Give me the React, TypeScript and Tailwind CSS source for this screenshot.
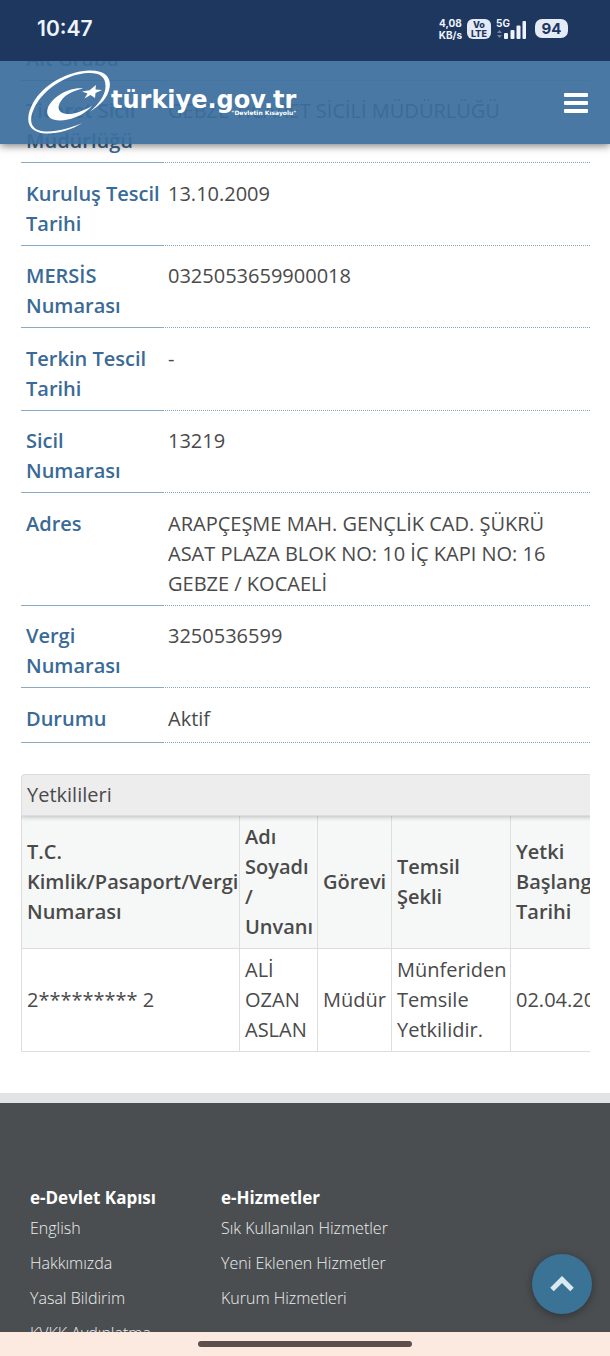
import type { ReactNode } from "react";

const DETAILS: { label: ReactNode; value: string }[] = [
  { label: "Alt Grubu", value: "" },
  { label: "Ticaret Sicil Müdürlüğü", value: "GEBZE TİCARET SİCİLİ MÜDÜRLÜĞÜ" },
  { label: "Kuruluş Tescil Tarihi", value: "13.10.2009" },
  { label: "MERSİS Numarası", value: "0325053659900018" },
  { label: "Terkin Tescil Tarihi", value: "-" },
  { label: "Sicil Numarası", value: "13219" },
  {
    label: "Adres",
    value:
      "ARAPÇEŞME MAH. GENÇLİK CAD. ŞÜKRÜ ASAT PLAZA BLOK NO: 10 İÇ KAPI NO: 16 GEBZE / KOCAELİ",
  },
  { label: "Vergi Numarası", value: "3250536599" },
  { label: "Durumu", value: "Aktif" },
];

const COLUMNS = [
  { title: "T.C. Kimlik/Pasaport/Vergi Numarası", width: "w-[218px]" },
  { title: "Adı Soyadı / Unvanı", width: "w-[78px]" },
  { title: "Görevi", width: "w-[74px]" },
  { title: "Temsil Şekli", width: "w-[119px]" },
  { title: "Yetki Başlangıç Tarihi", width: "w-[121px]" },
];

const OFFICERS = [
  ["2********* 2", "ALİ OZAN ASLAN", "Müdür", "Münferiden Temsile Yetkilidir.", "02.04.2018"],
];

const FOOTER = [
  {
    title: "e-Devlet Kapısı",
    links: ["English", "Hakkımızda", "Yasal Bildirim", "KVKK Aydınlatma"],
  },
  {
    title: "e-Hizmetler",
    links: ["Sık Kullanılan Hizmetler", "Yeni Eklenen Hizmetler", "Kurum Hizmetleri"],
  },
];

function StatusBar() {
  return (
    <div className="flex h-[61px] shrink-0 items-center justify-between bg-[#1d375f] pb-1 pl-[37px] pr-[42px] font-[Inter,sans-serif] text-[#eef3fc]">
      <span className="text-[21px] font-semibold">10:47</span>
      <div className="flex items-center gap-[5px]">
        <span className="text-center text-[10px] font-bold leading-3">
          4,08
          <br />
          KB/s
        </span>
        <span className="flex h-5 w-6 flex-col justify-center rounded-md bg-[#e4eaf6] text-center text-[9px] font-extrabold leading-[9px] text-[#1d375f]">
          <span>Vo</span>
          <span>LTE</span>
        </span>
        <svg viewBox="0 0 32 22" className="h-[22px] w-8" fill="currentColor">
          <text x="0" y="9" fontSize="10" fontWeight="700">
            5G
          </text>
          <path d="M1 15l2.500-3 2.500 3zM1 17l2.500 3 2.500-3z" opacity=".4" />
          <rect x="8" y="15" width="4" height="6" rx="1" />
          <rect x="14.500" y="12" width="4" height="9" rx="1" />
          <rect x="20.500" y="7.500" width="4" height="13.500" rx="1" />
          <rect x="26.500" y="3" width="3.500" height="18" rx="1" />
        </svg>
        <span className="ml-0.5 flex h-[19px] w-[33px] items-center justify-center rounded-[7px] bg-[#e4eaf6] text-[15px] font-bold text-[#1d375f]">
          94
        </span>
      </div>
    </div>
  );
}

function Logo() {
  return (
    <a href="#anasayfa" className="flex items-center text-white" aria-label="türkiye.gov.tr">
      <svg viewBox="7 10 84 66" className="h-[66px] w-[84px]" fill="currentColor">
        <path d="M62.500 63C48 72 29 76 18 72C6 68 6 56 13 43C23 25 46 12 68 10.500C83 9.500 92 16 89.500 28C88 37 81 45 70 51.500C80 43 85 35 85.500 27C86 16 79 12.500 68 13C48 14 27 27 17 43C9 56 9 66 18 70C29 74 47 69.500 62.500 63Z" />
        <path d="M63 28.500C48 27 31 38 27.500 49C25 59 36 62.500 48 59.500C57 57.500 66 53 72 46C63 51 54 54.500 47 54C38 53.500 36.500 47 41 41C45 35 52 31 63 28.500Z" />
        <path d="M76 25L75.500 29.500L82 30L75.500 33L75 38L70.500 35L64.500 38.500L67.500 33.500L62 31.500L69.500 30.200Z" />
      </svg>
      <span className="flex flex-col items-end font-['DejaVu_Sans',sans-serif] font-bold">
        <span className="text-[24px] leading-5">türkiye.gov.tr</span>
        <span className="text-[6px] leading-[6px]">"Devletin Kısayolu"</span>
      </span>
    </a>
  );
}

function SiteHeader() {
  return (
    <header className="absolute inset-x-0 top-0 z-10 flex h-[83px] items-center justify-between bg-[#3a6e9c]/93 pl-[27px] pr-[22px] shadow-[0_2px_8px_rgba(0,0,0,0.5)]">
      <Logo />
      <button type="button" aria-label="Menü" className="flex w-6 flex-col gap-1">
        <span className="h-1 rounded-[1px] bg-white" />
        <span className="h-1 rounded-[1px] bg-white" />
        <span className="h-1 rounded-[1px] bg-white" />
      </button>
    </header>
  );
}

function DetailList() {
  return (
    <dl>
      {DETAILS.map((row, i) => (
        <div key={i} className="group flex">
          <dt className="w-[142px] shrink-0 border-b border-[#8aaac6] pb-1.5 pl-[5px] pt-[15px] font-semibold text-[#3a6a96] group-odd:pt-4 group-last:pb-2">
            {row.label}
          </dt>
          <dd className="flex-1 border-b border-dotted border-[#7fa6c9] pb-1.5 pl-[5px] pr-8 pt-[15px] group-odd:pt-4 group-last:pb-2">
            {row.value}
          </dd>
        </div>
      ))}
    </dl>
  );
}

function OfficersTable() {
  return (
    <div className="mt-[31px] overflow-hidden rounded-tl">
      <div className="relative w-[610px] rounded-tl border border-[#dcdcdc] bg-[#ededed] px-[5px] py-[5px] shadow-[0_1px_5px_rgba(0,0,0,0.25)]">
        <h2 id="yetkilileri">Yetkilileri</h2>
      </div>
      <table aria-labelledby="yetkilileri" className="w-[610px] table-fixed border-collapse text-left">
        <thead>
          <tr className="bg-[#f6f8f8]">
            {COLUMNS.map((col) => (
              <th
                key={col.title}
                className={`${col.width} border border-t-0 border-[#dedede] px-[5px] py-1.5 font-semibold`}
              >
                {col.title}
              </th>
            ))}
          </tr>
        </thead>
        <tbody>
          {OFFICERS.map((cells) => (
            <tr key={cells[0]}>
              {cells.map((cell) => (
                <td key={cell} className="border border-[#dedede] px-[5px] py-1.5">
                  {cell}
                </td>
              ))}
            </tr>
          ))}
        </tbody>
      </table>
    </div>
  );
}

function SiteFooter() {
  return (
    <footer className="mt-[41px] flex grow border-t-[10px] border-[#e1e3e4] bg-[#4a4e51] pl-[30px] pt-20 text-white">
      {FOOTER.map((group) => (
        <nav key={group.title} className="w-[191px] shrink-0" aria-label={group.title}>
          <h3 className="text-[17px] font-bold leading-[30px]">{group.title}</h3>
          <ul className="text-base font-light leading-[30px] text-[#eeeeee]">
            {group.links.map((link) => (
              <li key={link} className="mb-[5px] whitespace-nowrap">
                <a href="#hizmetler">{link}</a>
              </li>
            ))}
          </ul>
        </nav>
      ))}
    </footer>
  );
}

export default function App() {
  return (
    <div className="flex h-screen flex-col overflow-hidden bg-white font-['Open_Sans',sans-serif] text-[20px] leading-[30px] text-[#4a4a4a]">
      <StatusBar />
      <div className="relative flex min-h-0 flex-1 flex-col overflow-hidden">
        <SiteHeader />
        <main className="-mt-[33px] shrink-0 pl-[21px] pr-5">
          <DetailList />
          <OfficersTable />
        </main>
        <SiteFooter />
        <button
          type="button"
          aria-label="Yukarı çık"
          className="absolute bottom-[18px] right-[18px] flex size-[60px] items-center justify-center rounded-full bg-[#3a7396] shadow-[0_2px_8px_rgba(0,0,0,0.35)]"
        >
          <svg viewBox="0 0 24 16" className="h-4 w-6" fill="none" stroke="#dde9f0" strokeWidth="5">
            <path d="M2 13.500L12 3.500L22 13.500" />
          </svg>
        </button>
      </div>
      <div className="flex h-6 shrink-0 items-center justify-center bg-[#fceae1]">
        <span className="h-1.5 w-[35%] rounded-full bg-[#5d4f4b]" />
      </div>
    </div>
  );
}
